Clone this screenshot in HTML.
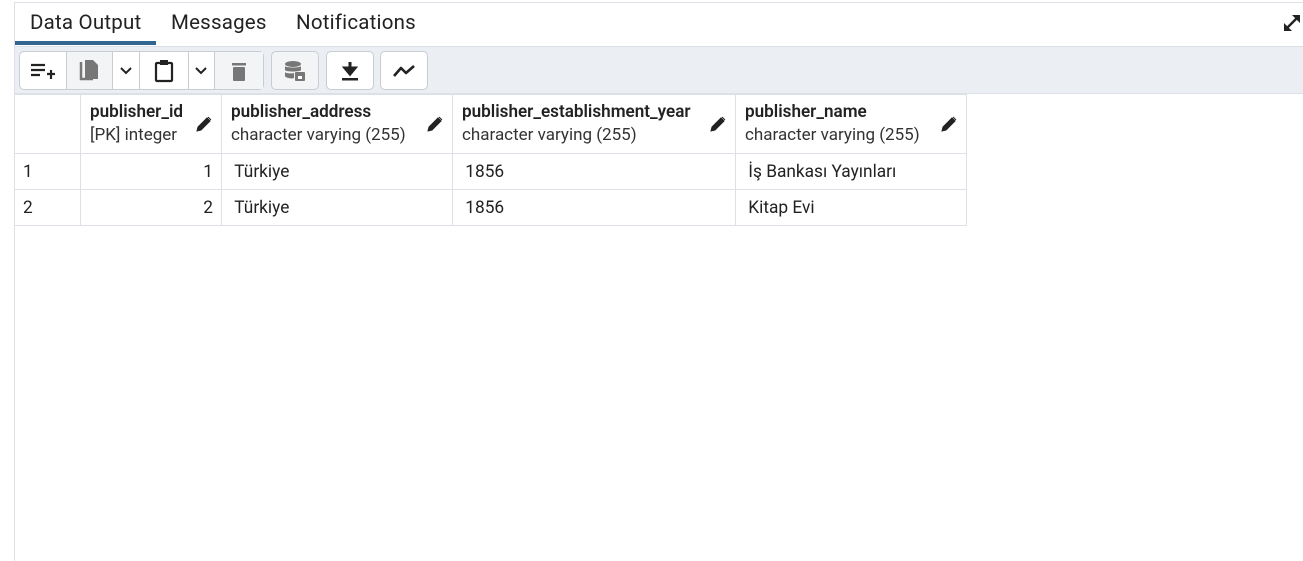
<!DOCTYPE html>
<html><head><meta charset="utf-8"><style>
*{box-sizing:border-box;margin:0;padding:0}
body{width:1303px;height:561px;background:#fff;font-family:"Roboto","Liberation Sans",sans-serif;position:relative;overflow:hidden;color:#222}
.frame{position:absolute;left:14px;top:2px;width:1289px;height:559px;border-left:1px solid #dde0e6;border-top:1px solid #dde0e6}
.tab{position:absolute;top:11px;font-size:20.5px;color:#222;letter-spacing:0.2px}
.ul{position:absolute;left:15px;top:41px;width:141px;height:4px;background:#326690}
.tb{position:absolute;left:15px;top:46px;width:1288px;height:48px;background:#ebeef3;border-top:1px solid #dde0e6;border-bottom:1px solid #dde0e6}
.grp{position:absolute;top:51px;height:39px;background:#fff;border:1px solid #c8ccd4;border-radius:5px;display:flex}
.b{height:100%;display:flex;align-items:center;justify-content:center;border-right:1px solid #c8ccd4}
.b:last-child{border-right:none}
.dis{background:#f3f4f6}
table{position:absolute;left:14px;top:94px;border-collapse:collapse;font-size:17.3px}
td{border:1px solid #dde0e6;height:36px;padding:0 8px;white-space:nowrap}
th{border:1px solid #dde0e6;height:59px;text-align:left;font-weight:normal;padding:0 9px;vertical-align:middle;position:relative;line-height:23px}
th b{font-weight:600;font-size:17.1px;display:block;color:#222}
th span{font-size:17px;color:#333}
th svg{position:absolute;right:9px;top:21px}
</style></head><body>
<div class="frame"></div>
<div class="tab" style="left:30px">Data Output</div>
<div class="tab" style="left:171px">Messages</div>
<div class="tab" style="left:296px">Notifications</div>
<div class="ul"></div>
<svg style="position:absolute;left:1282px;top:13px" width="20" height="20" viewBox="0 0 20 20"><path d="M3 17 L17 3" stroke="#222" stroke-width="2.4"/><path d="M2 18 L2 10 L10 18Z M18 2 L18 10 L10 2Z" fill="#222"/></svg>
<div class="tb"></div>
<div class="grp" style="left:19px;width:245px">
 <div class="b" style="width:47px"><svg width="26" height="20" viewBox="0 0 26 20"><path d="M1 4h14M1 9h14M1 14h9M17 13h8M21 9v9" stroke="#222" stroke-width="2.2"/></svg></div>
 <div class="b dis" style="width:47px"><svg width="20" height="24" viewBox="0 0 20 24"><path d="M2 3v17h12" stroke="#777" stroke-width="2.5" fill="none"/><path d="M6 1h8l5 5v14H6z" fill="#777"/></svg></div>
 <div class="b" style="width:27px"><svg width="12" height="8"><path d="M1 1l5 5 5-5" stroke="#222" stroke-width="2" fill="none"/></svg></div>
 <div class="b" style="width:49px"><svg width="20" height="24" viewBox="0 0 20 24"><rect x="2" y="4" width="16" height="18" rx="1" stroke="#222" stroke-width="2.2" fill="none"/><rect x="6" y="1" width="8" height="5" fill="#222"/></svg></div>
 <div class="b" style="width:27px"><svg width="12" height="8"><path d="M1 1l5 5 5-5" stroke="#222" stroke-width="2" fill="none"/></svg></div>
 <div class="b dis" style="width:48px"><svg width="16" height="20" viewBox="0 0 16 20"><rect x="1" y="2" width="14" height="2.5" fill="#777"/><rect x="2" y="6" width="12" height="14" rx="1" fill="#777"/></svg></div>
</div>
<div class="grp dis" style="left:271px;width:48px"><div class="b" style="width:100%"><svg width="22" height="22" viewBox="0 0 22 22"><ellipse cx="9" cy="4" rx="8" ry="3" fill="#777"/><path d="M1 6v4c0 2 16 2 16 0V6c0 2-16 2-16 0zM1 12v4c0 2 8 3 9 2v-5c-4 1-9 0-9-1z" fill="#777"/><rect x="11" y="12" width="10" height="9" rx="1" fill="#777"/><rect x="14" y="16" width="4" height="3" fill="#fff"/></svg></div></div>
<div class="grp" style="left:326px;width:48px"><div class="b" style="width:100%"><svg width="18" height="20" viewBox="0 0 18 20"><path d="M9 1v11M4 7l5 6 5-6z" stroke="#222" stroke-width="3" fill="#222"/><rect x="1" y="17" width="16" height="2.5" fill="#222"/></svg></div></div>
<div class="grp" style="left:380px;width:48px"><div class="b" style="width:100%"><svg width="24" height="14" viewBox="0 0 24 14"><path d="M2 12l7-8 5 5 8-7" stroke="#222" stroke-width="2.6" fill="none" stroke-linejoin="round"/></svg></div></div>
<table>
<tr><th style="width:66px"></th>
<th style="width:141px"><b>publisher_id</b><span>[PK] integer</span><svg width="16" height="16" viewBox="0 0 16 16"><path d="M1 15l1-4 9-9 3 3-9 9z M12 1l3 3" fill="#222" stroke="#222"/></svg></th>
<th style="width:231px"><b>publisher_address</b><span>character varying (255)</span><svg width="16" height="16" viewBox="0 0 16 16"><path d="M1 15l1-4 9-9 3 3-9 9z M12 1l3 3" fill="#222" stroke="#222"/></svg></th>
<th style="width:283px"><b>publisher_establishment_year</b><span>character varying (255)</span><svg width="16" height="16" viewBox="0 0 16 16"><path d="M1 15l1-4 9-9 3 3-9 9z M12 1l3 3" fill="#222" stroke="#222"/></svg></th>
<th style="width:231px"><b>publisher_name</b><span>character varying (255)</span><svg width="16" height="16" viewBox="0 0 16 16"><path d="M1 15l1-4 9-9 3 3-9 9z M12 1l3 3" fill="#222" stroke="#222"/></svg></th></tr>
<tr><td>1</td><td style="text-align:right">1</td><td>&nbsp;Türkiye</td><td>&nbsp;1856</td><td>&nbsp;İş Bankası Yayınları</td></tr>
<tr><td>2</td><td style="text-align:right">2</td><td>&nbsp;Türkiye</td><td>&nbsp;1856</td><td>&nbsp;Kitap Evi</td></tr>
</table>
</body></html>
